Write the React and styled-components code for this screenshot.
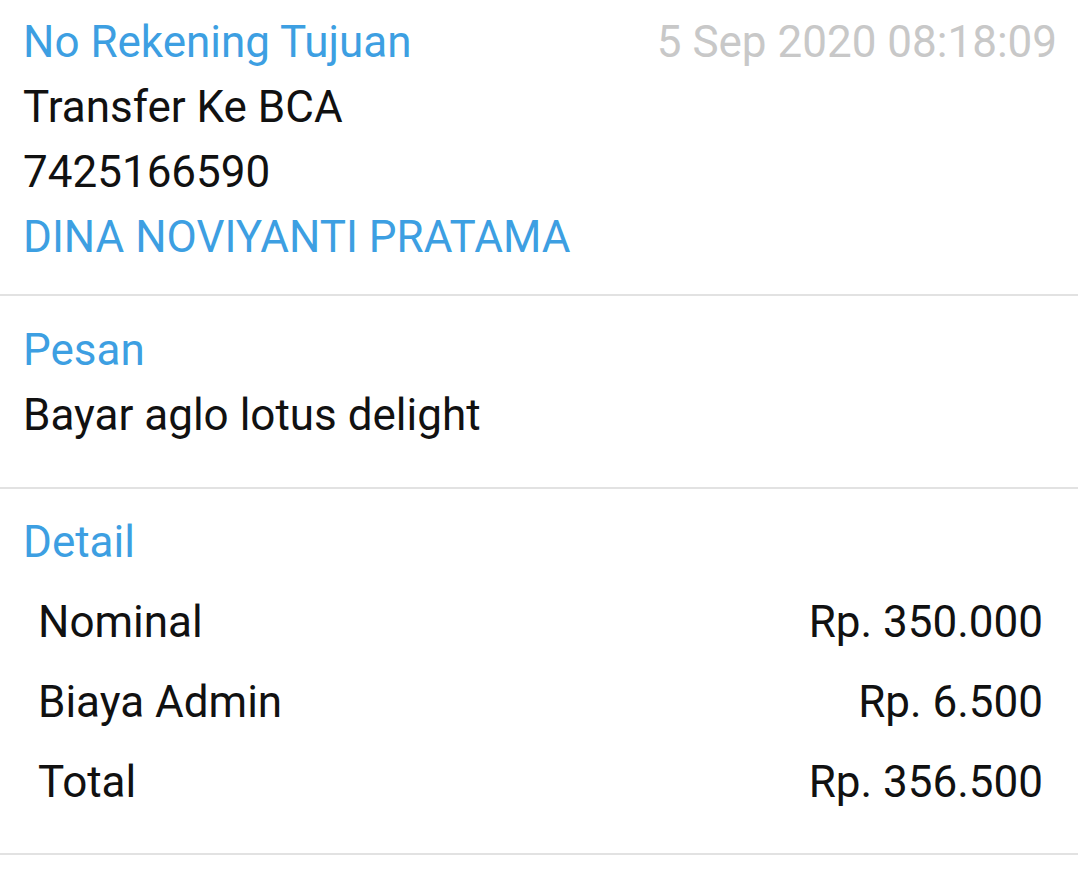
import React from "react";
import styled, { createGlobalStyle } from "styled-components";

const GlobalStyle = createGlobalStyle`
  html, body {
    margin: 0;
    padding: 0;
    background: #ffffff;
  }
  body {
    font-family: Roboto, "Noto Sans", "Liberation Sans", sans-serif;
    -webkit-font-smoothing: antialiased;
  }
`;

const Page = styled.div`
  width: 1078px;
  background: #fff;
`;

const Section = styled.section`
  padding: ${(p) => p.$pad || "10px 0 24px"};
  border-bottom: 2px solid #e2e2e2;
`;

const Inner = styled.div`
  padding: 0 21px 0 23px;
`;

const HeadRow = styled.div`
  display: flex;
  justify-content: space-between;
  align-items: baseline;
`;

const Label = styled.div`
  font-size: 44px;
  line-height: 65px;
  color: #3d9fe2;
`;

const Value = styled.div`
  font-size: 44px;
  line-height: 65px;
  color: ${(p) => (p.$accent ? "#3d9fe2" : "#111")};
`;

const Stamp = styled.div`
  font-size: 44px;
  color: #c8c8c8;
`;

const Table = styled.div`
  margin-top: 7px;
  padding: 0 35px 0 38px;
`;

const Line = styled.div`
  display: flex;
  justify-content: space-between;
  font-size: 44px;
  line-height: 80px;
  color: #111;
`;

const details = [
  ["Nominal", "Rp. 350.000"],
  ["Biaya Admin", "Rp. 6.500"],
  ["Total", "Rp. 356.500"],
];

export default function App() {
  return (
    <Page>
      <GlobalStyle />
      <Section>
        <Inner>
          <HeadRow>
            <Label>No Rekening Tujuan</Label>
            <Stamp>5 Sep 2020 08:18:09</Stamp>
          </HeadRow>
          <Value>Transfer Ke BCA</Value>
          <Value>7425166590</Value>
          <Value $accent>DINA NOVIYANTI PRATAMA</Value>
        </Inner>
      </Section>
      <Section $pad="22px 0 39px">
        <Inner>
          <Label>Pesan</Label>
          <Value>Bayar aglo lotus delight</Value>
        </Inner>
      </Section>
      <Section $pad="21px 0 31px">
        <Inner>
          <Label>Detail</Label>
        </Inner>
        <Table>
          {details.map(([name, amount]) => (
            <Line key={name}>
              <span>{name}</span>
              <span>{amount}</span>
            </Line>
          ))}
        </Table>
      </Section>
    </Page>
  );
}
